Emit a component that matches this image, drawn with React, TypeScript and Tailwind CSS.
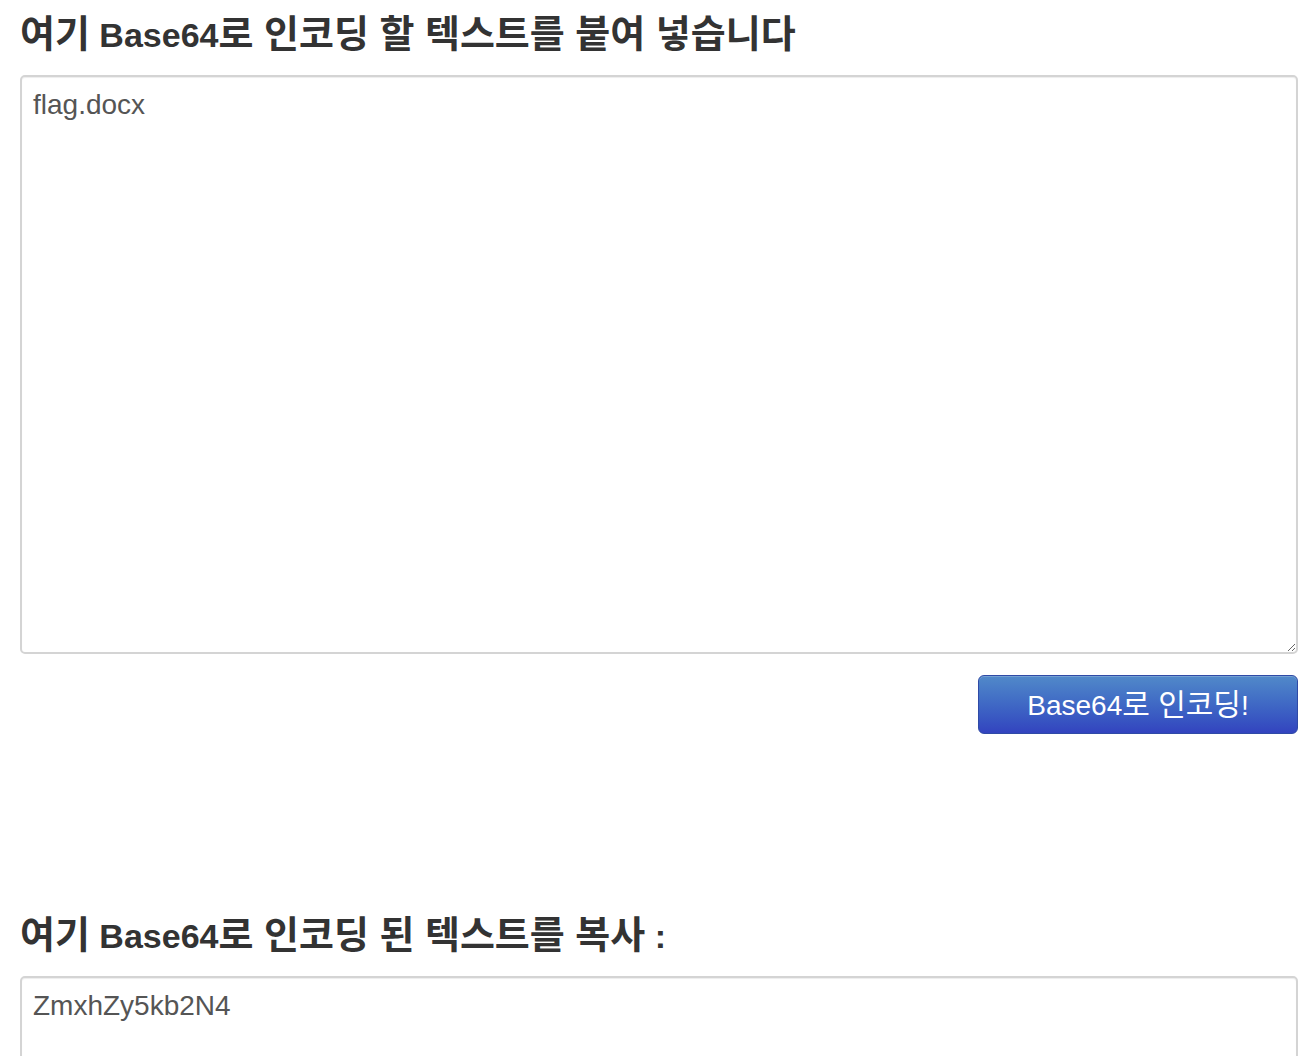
import React from "react";

const font = "[font-family:'Liberation_Sans','Noto_Sans_CJK_KR',sans-serif]";

const heading = `text-[34px] font-bold leading-[40px] text-[#333] ${font}`;

const field = `block w-full rounded-[5px] border-2 border-[#d4d4d4] bg-white px-[11px] py-[8px] text-[28px] leading-[1.43] text-[#555] shadow-[inset_0_1px_1px_rgba(0,0,0,0.075)] outline-none ${font}`;

// hangul renders a bit bigger than the latin in the original
const Ko = ({ children, size = "text-[38px]" }: { children: React.ReactNode; size?: string }) => (
  <span className={size}>{children}</span>
);

export default function App() {
  return (
    <div className="min-h-screen w-full overflow-hidden bg-white pl-[20px] pr-[8px]">
      {/* encode form */}
      <section className="pt-[14px]">
        <h3 className={heading}>
          <Ko>여기</Ko> Base64<Ko>로 인코딩 할 텍스트를 붙여 넣습니다</Ko>
        </h3>
        <textarea
          className={`${field} mt-[20px] h-[579px] resize`}
          defaultValue="flag.docx"
        />
        <div className="mt-[21px] flex justify-end">
          <button className={`h-[59px] w-[320px] rounded-[6px] border border-[#2f4aa6] bg-gradient-to-b from-[#5189c9] to-[#3343bf] text-[28px] leading-none text-white shadow-[inset_0_1px_0_rgba(255,255,255,0.2)] ${font}`}>
            Base64<Ko size="text-[30px]">로 인코딩</Ko>!
          </button>
        </div>
      </section>

      {/* result */}
      <section className="mt-[181px]">
        <h3 className={heading}>
          <Ko>여기</Ko> Base64<Ko>로 인코딩 된 텍스트를 복사</Ko> :
        </h3>
        <textarea
          className={`${field} mt-[20px] h-[300px] resize`}
          defaultValue="ZmxhZy5kb2N4"
          readOnly
        />
      </section>
    </div>
  );
}
